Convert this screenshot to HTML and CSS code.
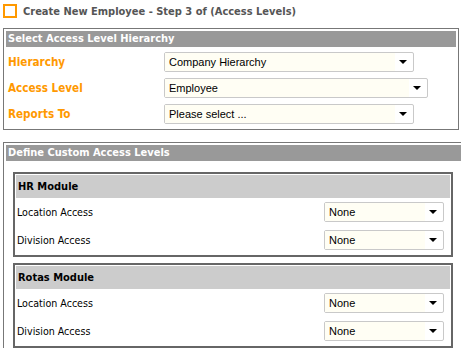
FILE: index.html
```html
<!DOCTYPE html>
<html lang="en">
<head>
    <meta charset="UTF-8">
    <meta name="viewport" content="width=device-width, initial-scale=1.0">
    <title>Create New Employee</title>
    <link rel="stylesheet" href="styles.css">
</head>
<body>
    <div class="page-title">
        <span class="title-box"></span>
        <h1>Create New Employee - Step 3 of (Access Levels)</h1>
    </div>

    <section class="panel panel-hierarchy">
        <h2 class="panel-head">Select Access Level Hierarchy</h2>
        <div class="field-row">
            <label class="field-label">Hierarchy</label>
            <div class="dropdown w-250"><span class="dd-value">Company Hierarchy</span><span class="dd-btn"><span class="caret"></span></span></div>
        </div>
        <div class="field-row">
            <label class="field-label">Access Level</label>
            <div class="dropdown w-264"><span class="dd-value">Employee</span><span class="dd-btn"><span class="caret"></span></span></div>
        </div>
        <div class="field-row">
            <label class="field-label">Reports To</label>
            <div class="dropdown w-250"><span class="dd-value">Please select ...</span><span class="dd-btn"><span class="caret"></span></span></div>
        </div>
    </section>

    <section class="panel panel-custom">
        <h2 class="panel-head">Define Custom Access Levels</h2>

        <div class="module">
            <h3 class="module-head">HR Module</h3>
            <div class="module-row">
                <span class="row-label">Location Access</span>
                <div class="dropdown w-120"><span class="dd-value">None</span><span class="dd-btn"><span class="caret"></span></span></div>
            </div>
            <div class="module-row">
                <span class="row-label">Division Access</span>
                <div class="dropdown w-120"><span class="dd-value">None</span><span class="dd-btn"><span class="caret"></span></span></div>
            </div>
        </div>

        <div class="module">
            <h3 class="module-head">Rotas Module</h3>
            <div class="module-row">
                <span class="row-label">Location Access</span>
                <div class="dropdown w-120"><span class="dd-value">None</span><span class="dd-btn"><span class="caret"></span></span></div>
            </div>
            <div class="module-row">
                <span class="row-label">Division Access</span>
                <div class="dropdown w-120"><span class="dd-value">None</span><span class="dd-btn"><span class="caret"></span></span></div>
            </div>
        </div>
    </section>
</body>
</html>
```

FILE: styles.css
```css
html, body {
    overflow: hidden;
}
body {
    margin: 0;
    background: #fff;
    font-family: "DejaVu Sans Condensed", "DejaVu Sans", sans-serif;
    font-size: 11px;
    color: #000;
}

.page-title {
    display: flex;
    align-items: center;
    height: 22px;
    padding-left: 3px;
    margin-bottom: 6px;
}
.title-box {
    width: 14px;
    height: 14px;
    box-sizing: border-box;
    border: 2px solid #f90;
    margin-right: 6px;
}
.page-title h1 {
    margin: 0;
    font-size: 11px;
    font-weight: bold;
    color: #555;
}

.panel {
    box-sizing: border-box;
    margin-left: 3px;
    border: 1px solid #777;
    padding: 2px;
}
.panel-hierarchy {
    width: 456px;
}
.panel-custom {
    width: 480px;
    margin-top: 12px;
}
.panel-head {
    margin: 0;
    height: 16px;
    line-height: 16px;
    padding-left: 2px;
    background: #999;
    color: #fff;
    font-size: 11px;
    font-weight: bold;
}

.field-row {
    display: flex;
    align-items: center;
    height: 26px;
}
.field-row:first-of-type {
    margin-top: 2px;
}
.field-label {
    width: 156px;
    padding-left: 2px;
    color: #f90;
    font-size: 11.6px;
    font-weight: bold;
}

.dropdown {
    display: flex;
    box-sizing: border-box;
    height: 20px;
    border: 1px solid #c9c9c9;
    border-radius: 2px;
    background: #fff;
    font-family: "Liberation Sans", Arial, sans-serif;
    font-size: 11px;
    color: #000;
}
.w-250 { width: 250px; }
.w-264 { width: 264px; }
.w-120 { width: 120px; }
.dd-value {
    flex: 1;
    padding-left: 4px;
    line-height: 18px;
    background: #fffef4;
    white-space: nowrap;
    overflow: hidden;
}
.dd-btn {
    display: flex;
    align-items: center;
    justify-content: center;
    width: 18px;
}
.caret {
    width: 0;
    height: 0;
    border-left: 4px solid transparent;
    border-right: 4px solid transparent;
    border-top: 4px solid #000;
    margin-right: 2px;
}

.module {
    box-sizing: border-box;
    width: 440px;
    margin: 11px 0 6px 7px;
    border: 2px solid #666;
    padding: 1px;
}
.module + .module {
    margin-top: 5px;
}
.module-head {
    margin: 0;
    height: 23px;
    line-height: 23px;
    padding-left: 2px;
    background: #ccc;
    font-size: 11px;
    font-weight: bold;
    color: #000;
}
.module-row {
    display: flex;
    align-items: center;
    justify-content: space-between;
    height: 28px;
    padding: 0 6px 0 1px;
}
.row-label {
    font-size: 10.6px;
}
```
